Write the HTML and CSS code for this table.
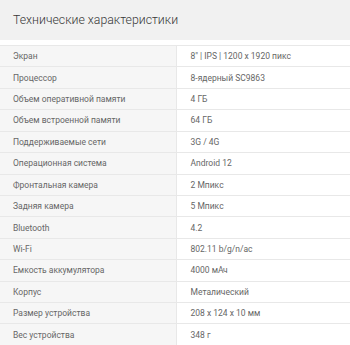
FILE: index.html
```html
<!DOCTYPE html>
<html lang="ru">
<head>
<meta charset="utf-8">
<link rel="stylesheet" href="styles.css">
</head>
<body>
<div class="specs">
  <h2 class="specs-title">Технические характеристики</h2>
  <table class="specs-table">
    <tbody>
      <tr><td class="label">Экран</td><td class="value">8" | IPS | 1200 x 1920 пикс</td></tr>
      <tr><td class="label">Процессор</td><td class="value">8-ядерный SC9863</td></tr>
      <tr><td class="label">Объем оперативной памяти</td><td class="value">4 ГБ</td></tr>
      <tr><td class="label">Объем встроенной памяти</td><td class="value">64 ГБ</td></tr>
      <tr><td class="label">Поддерживаемые сети</td><td class="value">3G / 4G</td></tr>
      <tr><td class="label">Операционная система</td><td class="value">Android 12</td></tr>
      <tr><td class="label">Фронтальная камера</td><td class="value">2 Мпикс</td></tr>
      <tr><td class="label">Задняя камера</td><td class="value">5 Мпикс</td></tr>
      <tr><td class="label">Bluetooth</td><td class="value">4.2</td></tr>
      <tr><td class="label">Wi-Fi</td><td class="value">802.11 b/g/n/ac</td></tr>
      <tr><td class="label">Емкость аккумулятора</td><td class="value">4000 мАч</td></tr>
      <tr><td class="label">Корпус</td><td class="value">Металический</td></tr>
      <tr><td class="label">Размер устройства</td><td class="value">208 x 124 x 10 мм</td></tr>
      <tr><td class="label">Вес устройства</td><td class="value">348 г</td></tr>
    </tbody>
  </table>
</div>
</body>
</html>
```
FILE: styles.css
```css
html, body {
  margin: 0;
  padding: 0;
  background: #ffffff;
}
body {
  font-family: Roboto, "Liberation Sans", sans-serif;
}
.specs {
  width: 350px;
}
.specs-title {
  margin: 0 0 5px 0;
  height: 40px;
  box-sizing: border-box;
  padding: 0 0 0 13px;
  display: flex;
  align-items: center;
  background: #f1f1f1;
  color: #383838;
  font-size: 12.3px;
  font-weight: 300;
}
.specs-table {
  width: 100%;
  border-collapse: collapse;
  table-layout: fixed;
}
.specs-table td {
  height: 21.43px;
  box-sizing: border-box;
  padding: 0;
  border-top: 1px solid #e8e8e8;
  font-size: 8.5px;
  color: #666666;
  vertical-align: middle;
}
.specs-table .label {
  width: 176px;
  padding-left: 13px;
  background: #f6f6f6;
  border-right: 1px solid #e8e8e8;
}
.specs-table .value {
  padding-left: 14px;
  background: #ffffff;
}
```
